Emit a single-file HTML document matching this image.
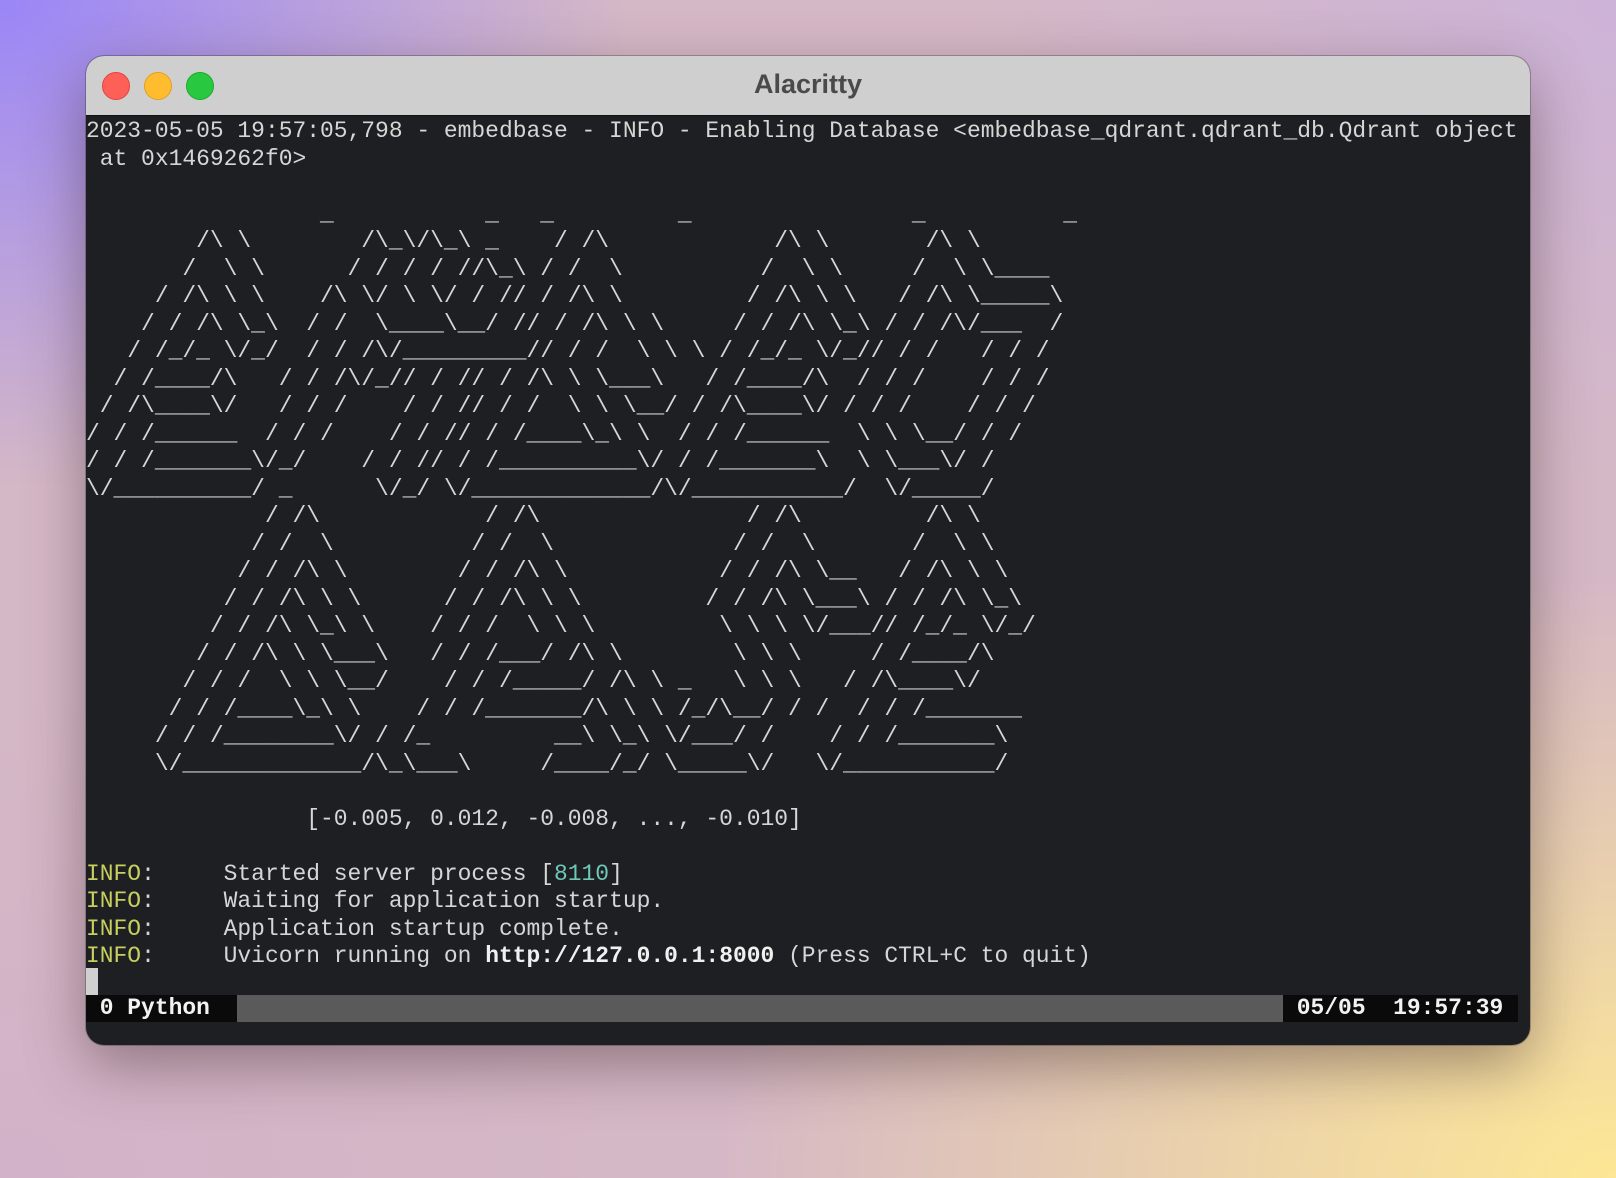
<!DOCTYPE html>
<html><head><meta charset="utf-8"><style>
html,body{margin:0;padding:0;width:1616px;height:1178px;overflow:hidden}
body{position:relative;background:
radial-gradient(ellipse 900px 700px at 0% 0%, #9a86f7 0%, rgba(154,134,247,0) 70%),
radial-gradient(ellipse 1200px 800px at 100% 100%, #fde795 0%, rgba(253,231,149,0.6) 30%, rgba(253,231,149,0) 75%),
radial-gradient(ellipse 800px 600px at 100% 0%, #cdb3d8 0%, rgba(205,179,216,0) 80%),
radial-gradient(ellipse 800px 600px at 0% 100%, #d2b2c8 0%, rgba(210,178,200,0) 80%),
#d5b8c6;}
.win{position:absolute;left:86px;top:56px;width:1444px;height:989px;border-radius:18px;background:#1e1f22;overflow:hidden;box-shadow:0 20px 60px rgba(60,40,40,.45),0 0 0 1px rgba(0,0,0,.25)}
.tb{position:absolute;left:0;top:0;width:100%;height:59px;background:#d0cfd0;border-bottom:1px solid #111}
.dot{position:absolute;top:16px;width:26px;height:26px;border-radius:50%}
.title{position:absolute;left:0;right:0;top:13px;text-align:center;font:bold 27px "Liberation Sans",sans-serif;color:#4a4a4a}
pre{position:absolute;left:0;top:62px;margin:0;font-family:"Liberation Mono",monospace;font-size:22.95px;line-height:27.5px;color:#d6d6d6;white-space:pre}
.y{color:#c8cf5f}.c{color:#6fc7b8}b{color:#f0f0f0}
.sb{position:absolute;left:0;top:939px;width:1432px;height:27px;background:#5a5a5a}
.sbl{position:absolute;left:0;top:0;width:151px;height:27px;background:#0a0a0a;color:#f2f2f2;font:bold 22.95px/27px "Liberation Mono",monospace;white-space:pre}
.sbr{position:absolute;left:1197px;top:0;width:235px;height:27px;background:#0a0a0a;color:#f2f2f2;font:bold 22.95px/27px "Liberation Mono",monospace;white-space:pre}
.cur{position:absolute;left:0;top:912px;width:12px;height:27px;background:#d0d0d0}
</style></head><body>
<div class="win">
<div class="tb"><div class="dot" style="left:16px;background:#fe5f57;border:1px solid #e0443e"></div><div class="dot" style="left:58px;background:#febc2e;border:1px solid #dea123"></div><div class="dot" style="left:100px;background:#28c840;border:1px solid #1aab29"></div><div class="title">Alacritty</div></div>
<pre>2023-05-05 19:57:05,798 - embedbase - INFO - Enabling Database &lt;embedbase_qdrant.qdrant_db.Qdrant object
 at 0x1469262f0&gt;

                 _           _   _         _                _          _
        /\ \        /\_\/\_\ _    / /\            /\ \       /\ \
       /  \ \      / / / / //\_\ / /  \          /  \ \     /  \ \____
     / /\ \ \    /\ \/ \ \/ / // / /\ \         / /\ \ \   / /\ \_____\
    / / /\ \_\  / /  \____\__/ // / /\ \ \     / / /\ \_\ / / /\/___  /
   / /_/_ \/_/  / / /\/_________// / /  \ \ \ / /_/_ \/_// / /   / / /
  / /____/\   / / /\/_// / // / /\ \ \___\   / /____/\  / / /    / / /
 / /\____\/   / / /    / / // / /  \ \ \__/ / /\____\/ / / /    / / /
/ / /______  / / /    / / // / /____\_\ \  / / /______  \ \ \__/ / /
/ / /_______\/_/    / / // / /__________\/ / /_______\  \ \___\/ /
\/__________/ _      \/_/ \/_____________/\/___________/  \/_____/
             / /\            / /\               / /\         /\ \
            / /  \          / /  \             / /  \       /  \ \
           / / /\ \        / / /\ \           / / /\ \__   / /\ \ \
          / / /\ \ \      / / /\ \ \         / / /\ \___\ / / /\ \_\
         / / /\ \_\ \    / / /  \ \ \         \ \ \ \/___// /_/_ \/_/
        / / /\ \ \___\   / / /___/ /\ \        \ \ \     / /____/\
       / / /  \ \ \__/    / / /_____/ /\ \ _   \ \ \   / /\____\/
      / / /____\_\ \    / / /_______/\ \ \ /_/\__/ / /  / / /_______
     / / /________\/ / /_         __\ \_\ \/___/ /    / / /_______\
     \/_____________/\_\___\     /____/_/ \_____\/   \/___________/

                [-0.005, 0.012, -0.008, ..., -0.010]

<span class="y">INFO</span>:     Started server process [<span class="c">8110</span>]
<span class="y">INFO</span>:     Waiting for application startup.
<span class="y">INFO</span>:     Application startup complete.
<span class="y">INFO</span>:     Uvicorn running on <b>http://127.0.0.1:8000</b> (Press CTRL+C to quit)</pre>
<div class="cur"></div>
<div class="sb"><div class="sbl"> 0 Python</div><div class="sbr"> 05/05  19:57:39</div></div>
</div>
</body></html>
